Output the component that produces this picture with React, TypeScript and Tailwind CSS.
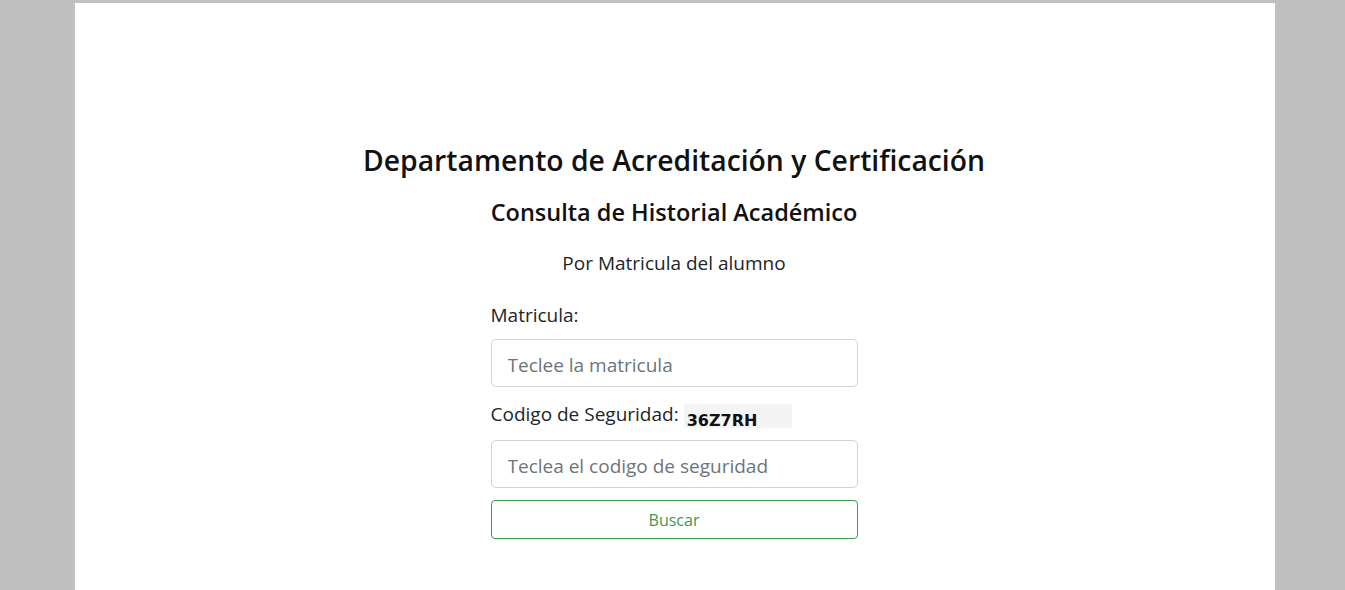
export default function App() {
  return (
    <div className="min-h-[590px] w-full bg-[#c0c0c0] pt-[3px] font-['Open_Sans',sans-serif] text-[#212529]">
      <main className="ml-[75px] flex h-[587px] w-[1200px] flex-col items-center bg-white pt-[140px] pr-[2px]">
        <h3 className="text-[28.3px] leading-[34px] font-semibold text-[#111]">
          Departamento de Acreditación y Certificación
        </h3>
        <h4 className="mt-[21px] text-[23.5px] leading-[29px] font-semibold text-[#111]">
          Consulta de Historial Académico
        </h4>
        <p className="mt-[24px] text-[19px] leading-[24px]">Por Matricula del alumno</p>

        <form className="mt-[28px] flex w-[367px] flex-col">
          <label className="text-[19px] leading-[24px]">Matricula:</label>
          <input
            className="mt-[12px] h-[48px] rounded-[5px] border border-[#ced4da] px-4 pt-[3px] text-[19px] outline-none placeholder:text-[#6c757d]"
            placeholder="Teclee la matricula"
          />
          <div className="mt-[15px] flex items-start">
            <label className="text-[19px] leading-[24px]">Codigo de Seguridad:</label>
            <span className="mt-[2px] ml-[5px] block h-[24px] w-[108px] bg-[#f4f4f4] pt-[9px] pl-[3px] font-['DejaVu_Sans',sans-serif] text-[16px] leading-[16px] font-bold text-[#111]">
              36Z7RH
            </span>
          </div>
          <input
            className="mt-[12px] h-[48px] rounded-[5px] border border-[#ced4da] px-4 pt-[3px] text-[19px] outline-none placeholder:text-[#6c757d]"
            placeholder="Teclea el codigo de seguridad"
          />
          <button
            type="button"
            className="mt-[12px] h-[39px] rounded-[4px] border border-[#3a9a4f] text-[16px] text-[#3a9a4f]"
          >
            Buscar
          </button>
        </form>
      </main>
    </div>
  );
}
